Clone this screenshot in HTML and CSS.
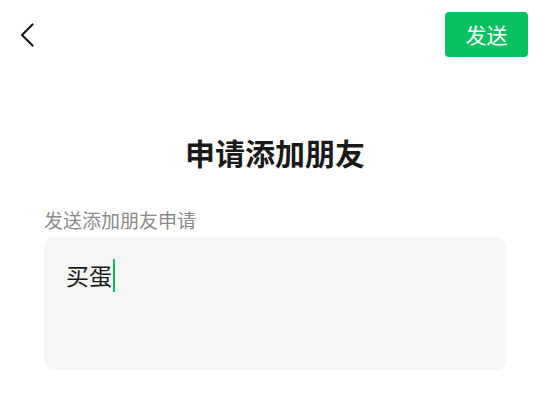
FILE: index.html
```html
<!DOCTYPE html>
<html lang="zh">
<head>
<meta charset="utf-8">
<link rel="stylesheet" href="styles.css">
</head>
<body>
<div class="page">
  <header class="topbar">
    <span class="back">
      <svg width="14" height="24" viewBox="0 0 14 24"><path d="M12.5 1.5 L2 12 L12.5 22.5" fill="none" stroke="#1a1a1a" stroke-width="2.2" stroke-linecap="round" stroke-linejoin="round"/></svg>
    </span>
    <button class="send">发送</button>
  </header>
  <h1 class="title">申请添加朋友</h1>
  <div class="label">发送添加朋友申请</div>
  <div class="box">
    <div class="input">买蛋<span class="caret"></span></div>
  </div>
</div>
</body>
</html>
```
FILE: styles.css
```css
html, body {
  margin: 0;
  padding: 0;
  background: #ffffff;
}
body {
  font-family: "Noto Sans CJK SC", "Noto Sans", sans-serif;
  color: #1a1a1a;
}
.page {
  width: 550px;
  height: 404px;
  overflow: hidden;
}
.topbar {
  display: flex;
  justify-content: space-between;
  align-items: flex-start;
  padding: 12px 22px 0 20px;
}
.back {
  display: block;
  margin-top: 11px;
  width: 14px;
  height: 24px;
}
.back svg {
  display: block;
}
.send {
  width: 83px;
  height: 45px;
  border: none;
  border-radius: 4px;
  background: #07c160;
  color: #ffffff;
  font-family: "Noto Sans CJK SC", sans-serif;
  font-size: 21px;
  line-height: 45px;
  padding: 0;
}
.title {
  margin: 75px 0 0;
  text-align: center;
  font-size: 30px;
  line-height: 40px;
  font-weight: 700;
  color: #1a1a1a;
}
.label {
  margin: 35px 44px 0;
  font-size: 19px;
  line-height: 26px;
  color: #8a8a8a;
}
.box {
  margin: 4px 44px 0;
  height: 133px;
  box-sizing: border-box;
  background: #f6f6f6;
  border-radius: 10px;
  padding: 22px 22px;
}
.input {
  font-size: 23px;
  line-height: 33px;
  color: #1a1a1a;
  display: flex;
  align-items: center;
}
.caret {
  display: inline-block;
  width: 2px;
  height: 33px;
  background: #07c160;
  margin-left: 1px;
}
```
